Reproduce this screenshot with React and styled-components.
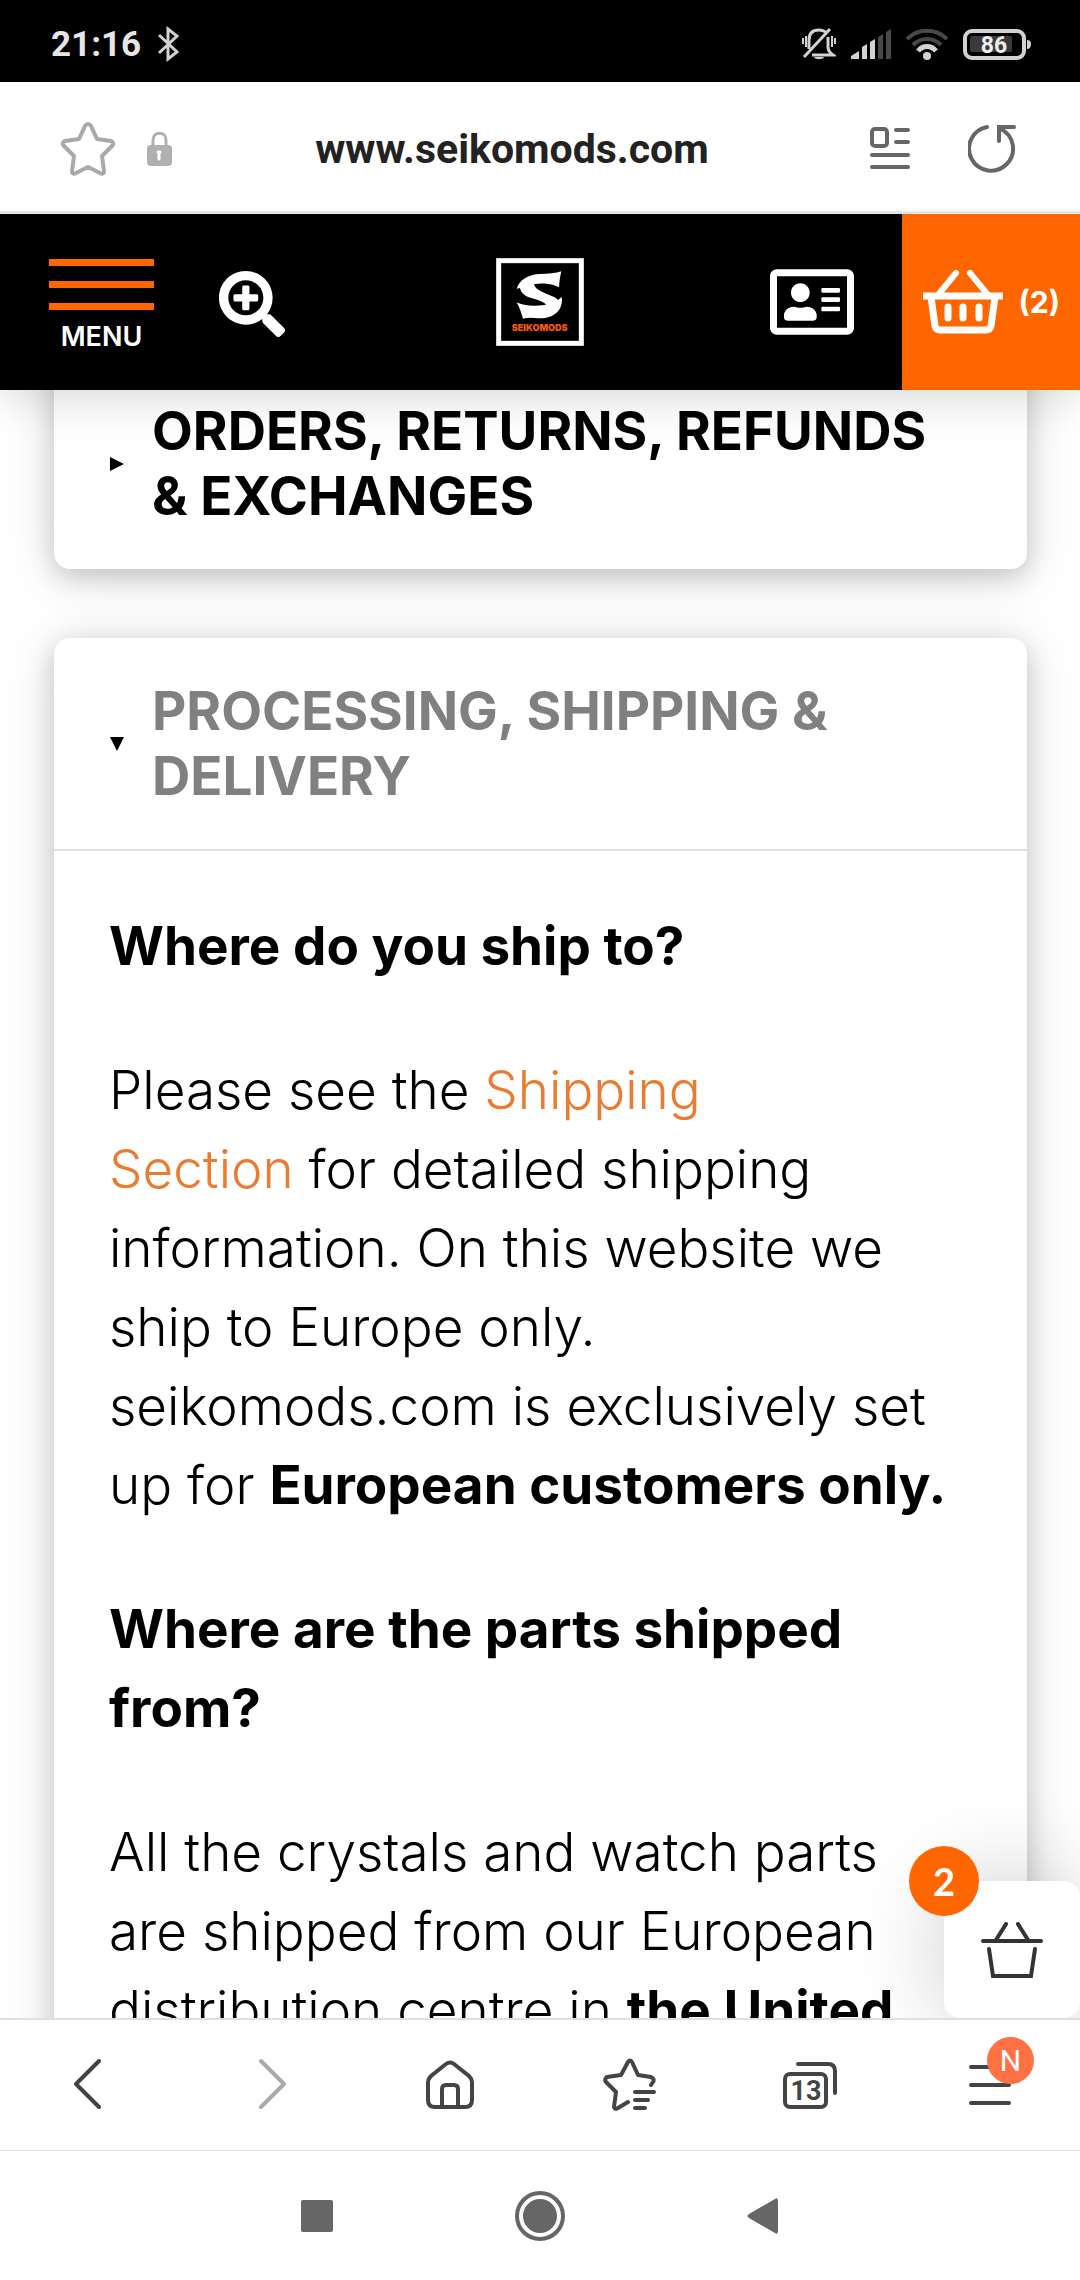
import React from "react";
import styled, { createGlobalStyle } from "styled-components";
import { FaRegAddressCard, FaSearchPlus } from "react-icons/fa";


export default function App() {
    return (
        <Phone>
            <GlobalStyle />
            <StatusBar />
            <AddressBar />
            <ShopHeader />
            <Content>
                <Faq>
                    <FaqCard title={"ORDERS, RETURNS, REFUNDS &\u00a0EXCHANGES"} />
                    <FaqCard title="PROCESSING, SHIPPING & DELIVERY" open>
                        <h3>Where do you ship to?</h3>
                        <p>
                            Please see the <a href="#shipping">Shipping<br />Section</a> for detailed shipping
                            information. On this website we ship to Europe only. seikomods.com is
                            exclusively set up for <strong>European customers only.</strong>
                        </p>
                        <h3>Where are the parts shipped from?</h3>
                        <p>
                            All the crystals and watch parts<br />
                            are shipped from our European distribution
                            centre in <strong>the United</strong>
                        </p>
                    </FaqCard>
                </Faq>
                <FloatingCart aria-label="Open basket">
                    <CartCount>2</CartCount>
                    <svg width="62" height="56" viewBox="0 0 62 56" fill="none" stroke="#333" strokeWidth="4" strokeLinecap="round">
                        <path d="M2 19H60M15 18L25 2M47 18L37 2M8 27L12 54H50L54 27" />
                    </svg>
                </FloatingCart>
            </Content>
            <BrowserBar />
            <SystemNav />
        </Phone>
    );
};

function StatusBar() {
    return (
        <StatusContainer>
            <StatusGroup $gap="17px">
                <Clock>21:16</Clock>
                <svg width="21" height="36" viewBox="0 0 21 36" fill="none" stroke="#d2d2d2" strokeWidth="3">
                    <path d="M1 9L19 26L10 33V3L19 10L1 27" />
                </svg>
            </StatusGroup>
            <StatusGroup $gap="15px">
                <svg width="34" height="34" viewBox="0 0 34 34" fill="none" stroke="#d2d2d2" strokeWidth="3">
                    <path d="M7 22V13C7 6 11 3 17 3C20 3 22 4 24 5M26 10V20C26 24 28 26 31 28H10" />
                    <path d="M2 30L28 2" />
                    <path d="M1 11V17M4 9V20M30 9V20M33 11V17" strokeWidth="2" />
                    <path d="M12 30H22C21 33 13 33 12 30Z" fill="#d2d2d2" stroke="none" />
                </svg>
                <svg width="40" height="32" viewBox="0 0 40 32" fill="#d2d2d2">
                    <path d="M0 30V28L8 23V31H0ZM11 19L16 16V31H11ZM19 14L24 11V31H19Z" />
                    <path d="M27 9L32 6V31H27ZM35 4L40 1V31H35Z" fill="#484848" />
                </svg>
                <svg width="42" height="34" viewBox="0 0 42 34" fill="none" strokeWidth="4">
                    <path d="M1 12C12 1 30 1 41 12M7 18C15 10 27 10 35 18" stroke="#484848" />
                    <path d="M12 24C17 18 25 18 30 24" stroke="#d2d2d2" strokeWidth="5" />
                    <circle cx="21" cy="29" r="4" fill="#d2d2d2" />
                </svg>
                <svg width="69" height="34" viewBox="0 0 69 34">
                    <rect x="2" y="4" width="59" height="27" rx="7" fill="none" stroke="#d2d2d2" strokeWidth="4" />
                    <rect x="7" y="9" width="42" height="16" rx="2" fill="#3a3a3a" />
                    <path d="M64 13Q68 13 68 17Q68 22 64 22Z" fill="#d2d2d2" />
                    <text x="31" y="26" fill="#eee" fontSize="23" fontWeight="700" textAnchor="middle">86</text>
                </svg>
            </StatusGroup>
        </StatusContainer>
    );
}

function AddressBar() {
    return (
        <AddressContainer>
            <IconButton aria-label="Add bookmark">
                <svg width="54" height="54" viewBox="0 0 54 54" fill="none" stroke="#a9a9a9" strokeWidth="4" strokeLinejoin="round">
                    <path d="M24 4Q27 0 30 4L36 17L50 19Q54 21 51 24L41 34L43 49Q43 53 39 51L27 45L15 51Q11 53 11 49L13 34L3 24Q0 21 4 19L18 17Z" />
                </svg>
            </IconButton>
            <svg width="25" height="35" viewBox="0 0 25 35">
                <path d="M6 15V9C6 0 19 0 19 9V15" fill="none" stroke="#b0b0b0" strokeWidth="3" />
                <rect y="14" width="25" height="21" rx="4" fill="#b0b0b0" />
                <path d="M12 22V28M11 21H13" stroke="#fff" strokeWidth="3" strokeLinecap="round" />
            </svg>
            <UrlInput aria-label="Address" defaultValue="www.seikomods.com" />
            <IconButton aria-label="Reader mode">
                <svg width="40" height="44" viewBox="0 0 40 44" fill="none" stroke="#666" strokeWidth="4" strokeLinecap="round">
                    <rect x="2" y="2" width="15" height="17" rx="3" />
                    <path d="M26 3H38M26 15H38M2 28H38M2 40H38" />
                </svg>
            </IconButton>
            <IconButton aria-label="Reload">
                <svg width="48" height="50" viewBox="0 0 48 50" fill="none" stroke="#666" strokeWidth="4" strokeLinecap="round">
                    <path d="M19 3A22 22 0 1 0 33 5M46 3H31V17" />
                </svg>
            </IconButton>
        </AddressContainer>
    );
}

function ShopHeader() {
    return (
        <HeaderContainer>
            <HeaderLeft>
                <MenuButton>
                    <MenuLine />
                    <MenuLine />
                    <MenuLine />
                    MENU
                </MenuButton>
                <IconButton aria-label="Search">
                    <FaSearchPlus size={66} color="#fff" />
                </IconButton>
            </HeaderLeft>
            <LogoLink href="#home" aria-label="Seikomods home">
                <svg width="88" height="88" viewBox="108 84 264 264">
                    <rect x="116" y="92" width="248" height="248" fill="#000" stroke="#fff" strokeWidth="15" />
                    <path
                        fill="#fff"
                        d="M170 176C178 150 205 133 240 132C265 132 288 130 304 124C300 140 298 156 297 172C280 162 245 157 222 163C225 178 245 185 262 193C278 199 290 204 294 210L305 201C308 215 304 235 292 246C278 260 258 266 235 265C218 263 203 262 189 266C184 250 178 230 170 217C190 228 225 230 258 224C250 213 225 208 207 202C190 195 182 185 180 174Z"
                    />
                    <text x="239" y="303" fill="#f15a0a" fontFamily="Inter" fontSize="27" fontWeight="900" textAnchor="middle">SEIKOMODS</text>
                </svg>
            </LogoLink>
            <HeaderRight>
                <IconButton aria-label="Account">
                    <FaRegAddressCard size={84} color="#fff" />
                </IconButton>
                <BasketButton aria-label="Basket">
                    <svg width="80" height="66" viewBox="0 0 80 66" fill="none" stroke="#fff" strokeLinecap="round">
                        <path d="M3 27H77" strokeWidth="7" strokeLinecap="square" />
                        <path d="M15 26L33 4M65 26L47 4" strokeWidth="6" />
                        <path d="M8 28L12 57Q13 61 17 61H63Q67 61 68 57L72 28" strokeWidth="7" />
                        <path d="M25 38V49M40 38V49M56 38V49" strokeWidth="7" />
                    </svg>
                    (2)
                </BasketButton>
            </HeaderRight>
        </HeaderContainer>
    );
}

function FaqCard({ title, open, children }) {
    return (
        <Card>
            <CardTitle>
                <CardToggle aria-expanded={!!open} $open={open}>
                    <svg width="14" height="14" viewBox="0 0 14 14">
                        <path d={open ? "M0 0H14L7 14Z" : "M0 0V14L14 7Z"} />
                    </svg>
                    <span>{title}</span>
                </CardToggle>
            </CardTitle>
            {open && <CardBody>{children}</CardBody>}
        </Card>
    );
}

function BrowserBar() {
    return (
        <BrowserNav>
            <IconButton aria-label="Back">
                <svg width="32" height="54" viewBox="0 0 32 54" fill="none" stroke="#444" strokeWidth="4" strokeLinecap="round" strokeLinejoin="round">
                    <path d="M25 3L2 26L25 49" />
                </svg>
            </IconButton>
            <IconButton aria-label="Forward" disabled>
                <svg width="32" height="54" viewBox="0 0 32 54" fill="none" stroke="#aaa" strokeWidth="4" strokeLinecap="round" strokeLinejoin="round">
                    <path d="M7 3L30 26L7 49" />
                </svg>
            </IconButton>
            <IconButton aria-label="Home">
                <svg width="48" height="50" viewBox="0 0 48 50" fill="none" stroke="#444" strokeWidth="4">
                    <path d="M20 4Q24 1 28 4L43 16Q46 19 46 22V40Q46 47 39 47H9Q2 47 2 40V22Q2 19 5 16Z" />
                    <path d="M16 47V29Q16 25 20 25H28Q32 25 32 29V47" />
                </svg>
            </IconButton>
            <IconButton aria-label="Bookmarks">
                <svg width="54" height="54" viewBox="0 0 54 54" fill="none" stroke="#444" strokeWidth="4" strokeLinecap="round" strokeLinejoin="round">
                    <path d="M48 27L50 24Q52 21 48 19L35 17L29 4Q27 1 25 4L18 17L4 19Q1 21 3 24L13 34L11 49Q12 52 15 50L25 44" />
                    <path d="M32 34H51M32 42H45M32 50H42" />
                </svg>
            </IconButton>
            <IconButton aria-label="Tabs">
                <svg width="54" height="50" viewBox="0 0 54 50" fill="none" stroke="#444" strokeWidth="4" strokeLinecap="round">
                    <path d="M15 4H45Q52 4 52 11V33" />
                    <rect x="2" y="14" width="41" height="33" rx="5" />
                    <text x="23" y="40" fill="#444" stroke="none" fontSize="27" fontWeight="700" textAnchor="middle">13</text>
                </svg>
            </IconButton>
            <IconButton aria-label="Menu">
                <svg width="42" height="42" viewBox="0 0 42 42" fill="none" stroke="#444" strokeWidth="4" strokeLinecap="round">
                    <path d="M2 3H40M2 21H40M2 39H40" />
                </svg>
                <NewBadge>N</NewBadge>
            </IconButton>
        </BrowserNav>
    );
}

function SystemNav() {
    return (
        <SystemContainer>
            <IconButton aria-label="Recent apps">
                <svg width="32" height="32" viewBox="0 0 32 32">
                    <rect width="32" height="32" rx="2" fill="#666" />
                </svg>
            </IconButton>
            <IconButton aria-label="Home screen">
                <svg width="50" height="50" viewBox="0 0 50 50">
                    <circle cx="25" cy="25" r="23" fill="none" stroke="#666" strokeWidth="4" />
                    <circle cx="25" cy="25" r="17" fill="#666" />
                </svg>
            </IconButton>
            <IconButton aria-label="Go back">
                <svg width="32" height="36" viewBox="0 0 32 36">
                    <path d="M2 16L28 1Q31 -1 31 3V33Q31 37 28 35L2 20Q-1 18 2 16Z" fill="#666" />
                </svg>
            </IconButton>
        </SystemContainer>
    );
}

// style divs/wrappers here
const GlobalStyle = createGlobalStyle`
    * {
        box-sizing: border-box;
    }

    body {
        margin: 0;
        background-color: white;
        font-family: Roboto, sans-serif;
    }

    h2, h3, p {
        margin: 0;
    }

    button, input {
        font: inherit;
        color: inherit;
        border: none;
        padding: 0;
        background: none;
    }

    svg {
        display: block;
        flex-shrink: 0;
    }
`;

const Phone = styled.div`
    display: flex;
    flex-direction: column;
    height: 100vh;
`;

const IconButton = styled.button`
    position: relative;
    display: flex;
    align-items: center;
    justify-content: center;
`;

const StatusContainer = styled.div`
    display: flex;
    align-items: center;
    justify-content: space-between;
    height: 82px;
    padding: 6px 48px 0 51px;
    background-color: black;
    flex-shrink: 0;
`;

const StatusGroup = styled.div`
    display: flex;
    align-items: center;
    gap: ${({ $gap }) => $gap};
`;

const Clock = styled.span`
    color: #e6e6e6;
    font-size: 35px;
    font-weight: 700;
`;

const AddressContainer = styled.div`
    position: relative;
    z-index: 3;
    display: flex;
    align-items: center;
    height: 132px;
    padding: 4px 64px 0 61px;
    border-bottom: 3px solid #e6e6e6;
    background-color: white;
    flex-shrink: 0;

    > :nth-child(2) {
        margin-left: 32px;
    }

    > :last-child {
        margin-left: 58px;
    }
`;

const UrlInput = styled.input`
    flex: 1;
    min-width: 0;
    margin-right: 18px;
    color: #222;
    font-size: 41px;
    font-weight: 700;
    text-align: center;
`;

const HeaderContainer = styled.header`
    position: relative;
    z-index: 2;
    display: grid;
    grid-template-columns: 1fr auto 1fr;
    align-items: center;
    height: 176px;
    background-color: black;
    box-shadow: 0 0 50px rgba(0, 0, 0, 0.2);
    flex-shrink: 0;
`;

const HeaderLeft = styled.div`
    display: flex;
    align-items: center;
    gap: 65px;
    padding: 4px 0 0 49px;
`;

const HeaderRight = styled.div`
    display: flex;
    align-items: center;
    align-self: stretch;
    justify-content: flex-end;
    gap: 48px;
`;

const MenuButton = styled.button`
    display: flex;
    flex-direction: column;
    align-items: center;
    gap: 15px;
    color: white;
    font-family: Inter, sans-serif;
    font-size: 27px;
    font-weight: 600;
    line-height: 24px;
`;

const MenuLine = styled.span`
    width: 105px;
    height: 7px;
    background-color: #ff6600;
`;

const LogoLink = styled.a`
    display: block;
`;

const BasketButton = styled.button`
    display: flex;
    align-items: center;
    align-self: stretch;
    gap: 15px;
    padding: 0 20px 0 21px;
    background-color: #ff6600;
    color: white;
    font-family: Inter, sans-serif;
    font-size: 30px;
    font-weight: 700;
`;

const Content = styled.main`
    position: relative;
    flex: 1;
    min-height: 0;
    overflow: hidden;
    color: black;
    font-family: Inter, sans-serif;
`;

const Faq = styled.div`
    display: flex;
    flex-direction: column;
    gap: 69px;
    margin-top: -32px;
    padding: 0 53px 0 54px;
`;

const Card = styled.section`
    border-radius: 16px;
    background-color: white;
    box-shadow: 0 8px 24px rgba(0, 0, 0, 0.14), 0 6px 50px rgba(0, 0, 0, 0.16);
`;

const CardTitle = styled.h2`
    font-size: 53px;
    font-weight: 700;
    line-height: 65px;
`;

const CardToggle = styled.button`
    display: flex;
    align-items: center;
    gap: 28px;
    width: 100%;
    padding: 41px 48px 40px 56px;
    color: ${({ $open }) => ($open ? "#808080" : "black")};
    text-align: left;

    svg {
        fill: black;
    }
`;

const CardBody = styled.div`
    display: flex;
    flex-direction: column;
    gap: 65px;
    padding: 56px 54px 56px 55px;
    border-top: 2px solid #e0e0e0;
    font-size: 53px;
    font-weight: 300;
    line-height: 79px;

    h3 {
        font-size: 53px;
        font-weight: 700;
    }

    strong {
        font-weight: 700;
    }

    a {
        color: #e97c30;
        text-decoration: none;
    }
`;

const FloatingCart = styled.button`
    position: absolute;
    right: 0;
    bottom: 0;
    display: flex;
    align-items: center;
    justify-content: center;
    width: 136px;
    height: 137px;
    border-radius: 16px;
    background-color: white;
    box-shadow: 0 0 90px rgba(0, 0, 0, 0.2);
`;

const CartCount = styled.span`
    position: absolute;
    top: -35px;
    left: -35px;
    width: 70px;
    border-radius: 50%;
    background-color: #ff6600;
    color: white;
    font-family: Lato, sans-serif;
    font-size: 38px;
    font-weight: 700;
    line-height: 70px;
    text-align: center;
`;

const BrowserNav = styled.nav`
    position: relative;
    display: grid;
    grid-template-columns: repeat(6, 1fr);
    align-items: center;
    justify-items: center;
    height: 133px;
    border-top: 2px solid #e0e0e0;
    border-bottom: 1px solid #e0e0e0;
    background-color: white;
    flex-shrink: 0;
`;

const NewBadge = styled.span`
    position: absolute;
    top: -27px;
    left: 18px;
    width: 47px;
    border-radius: 50%;
    background-color: #ff7043;
    color: white;
    font-size: 30px;
    line-height: 47px;
    text-align: center;
`;

const SystemContainer = styled.nav`
    display: flex;
    align-items: center;
    justify-content: center;
    gap: 182px;
    height: 129px;
    flex-shrink: 0;
`;
